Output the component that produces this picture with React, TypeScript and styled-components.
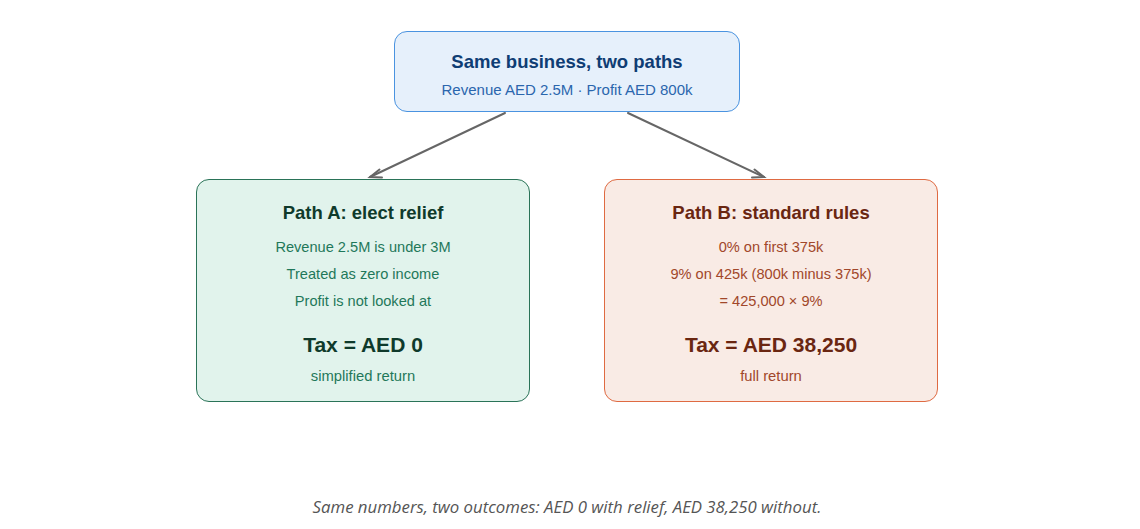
import React from 'react'
import styled, { createGlobalStyle } from 'styled-components'

const GlobalStyle = createGlobalStyle`
    body {
        margin: 0;
        background: #ffffff;
        font-family: "Liberation Sans", Arial, sans-serif;
    }
`

type Tone = 'green' | 'orange'

const palette = {
    green: { border: '#2a7358', bg: '#e1f3ec', title: '#0f3a2b', text: '#1f785a' },
    orange: { border: '#df6a42', bg: '#f9ebe5', title: '#6a2611', text: '#a1472a' },
}

interface PathProps {
    tone: Tone
    title: string
    lines: string[]
    total: string
    note: string
}

const PathCard = ({ tone, title, lines, total, note }: PathProps) => (
    <Card tone={tone}>
        <CardTitle tone={tone}>{title}</CardTitle>
        <Lines>
            {lines.map((line) => (
                <Line key={line} tone={tone}>{line}</Line>
            ))}
        </Lines>
        <Total tone={tone}>{total}</Total>
        <Note tone={tone}>{note}</Note>
    </Card>
)

const App = () => {
    return (
        <Page>
            <GlobalStyle />
            <Diagram>
                <Arrows width="1134" height="200" viewBox="0 0 1134 200">
                    <g stroke="#666666" strokeWidth="2" fill="none" strokeLinecap="round">
                        <line x1="505" y1="113" x2="370" y2="177" />
                        <polyline points="379.5,169.5 370,177 382,177.5" />
                        <line x1="628" y1="113" x2="764" y2="177" />
                        <polyline points="754.5,169.5 764,177 752,177.5" />
                    </g>
                </Arrows>
                <RootBox>
                    <RootTitle>Same business, two paths</RootTitle>
                    <RootSub>Revenue AED 2.5M · Profit AED 800k</RootSub>
                </RootBox>
                <Branches>
                    <PathCard
                        tone="green"
                        title="Path A: elect relief"
                        lines={['Revenue 2.5M is under 3M', 'Treated as zero income', 'Profit is not looked at']}
                        total="Tax = AED 0"
                        note="simplified return"
                    />
                    <PathCard
                        tone="orange"
                        title="Path B: standard rules"
                        lines={['0% on first 375k', '9% on 425k (800k minus 375k)', '= 425,000 × 9%']}
                        total="Tax = AED 38,250"
                        note="full return"
                    />
                </Branches>
            </Diagram>
            <Caption>Same numbers, two outcomes: AED 0 with relief, AED 38,250 without.</Caption>
        </Page>
    )
}

const Page = styled.div`
    width: 1134px;
    height: 529px;
    display: flex;
    flex-direction: column;
    align-items: center;
`

const Diagram = styled.div`
    position: relative;
    width: 100%;
    display: flex;
    flex-direction: column;
    align-items: center;
    padding-top: 31px;
    gap: 67px;
`

const Arrows = styled.svg`
    position: absolute;
    top: 0;
    left: 0;
    pointer-events: none;
`

const RootBox = styled.div`
    width: 346px;
    height: 81px;
    box-sizing: border-box;
    border: 1.5px solid #4a93e0;
    border-radius: 13px;
    background: #e6f0fb;
    display: flex;
    flex-direction: column;
    align-items: center;
    padding-top: 18px;
    gap: 6px;
`

const RootTitle = styled.div`
    font-size: 18.5px;
    line-height: 24px;
    font-weight: 700;
    color: #0f3d74;
`

const RootSub = styled.div`
    font-size: 15px;
    line-height: 20px;
    color: #2a66ad;
`

const Branches = styled.div`
    display: flex;
    gap: 74px;
`

const Card = styled.div<{ tone: Tone }>`
    width: 334px;
    height: 223px;
    box-sizing: border-box;
    border: 1.5px solid ${({ tone }) => palette[tone].border};
    border-radius: 13px;
    background: ${({ tone }) => palette[tone].bg};
    display: flex;
    flex-direction: column;
    align-items: center;
    padding-top: 21px;
`

const CardTitle = styled.div<{ tone: Tone }>`
    font-size: 18.5px;
    line-height: 24px;
    font-weight: 700;
    color: ${({ tone }) => palette[tone].title};
`

const Lines = styled.div`
    margin-top: 9px;
    display: flex;
    flex-direction: column;
    align-items: center;
`

const Line = styled.div<{ tone: Tone }>`
    font-size: 14.6px;
    line-height: 27px;
    color: ${({ tone }) => palette[tone].text};
`

const Total = styled.div<{ tone: Tone }>`
    margin-top: 15px;
    font-size: 21px;
    line-height: 30px;
    font-weight: 700;
    color: ${({ tone }) => palette[tone].title};
`

const Note = styled.div<{ tone: Tone }>`
    margin-top: 5px;
    font-size: 14.8px;
    line-height: 22px;
    color: ${({ tone }) => palette[tone].text};
`

const Caption = styled.div`
    margin-top: 94px;
    font-family: "Open Sans", "Liberation Sans", sans-serif;
    font-style: italic;
    font-size: 16.8px;
    line-height: 22px;
    color: #555555;
`

export default App
